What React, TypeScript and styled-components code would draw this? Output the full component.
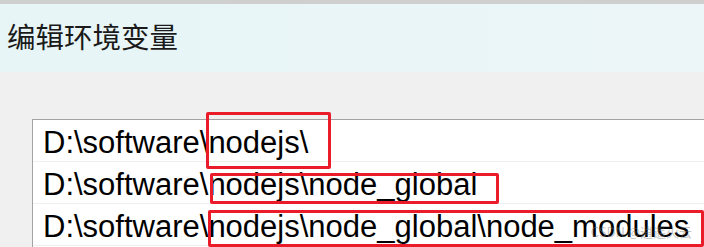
import React from 'react';
import styled, {createGlobalStyle} from "styled-components";

const GlobalStyle = createGlobalStyle`
html, body {
margin: 0;
padding: 0;
background: #f0f0f0;
overflow: hidden;
}
`

const Window = styled.div`
width: 704px;
height: 247px;
overflow: hidden;
display: flex;
flex-direction: column;
`
const TitleBar = styled.div`
height: 62px;
border-top: 4px solid #cfcfcf;
background: linear-gradient(90deg, #e7f5f6 0%, #ecf6f8 100%);
display: flex;
align-items: center;
padding-left: 7px;
padding-bottom: 6px;
box-sizing: content-box;
font-family: "Noto Sans CJK SC", "Microsoft YaHei", sans-serif;
font-size: 28.5px;
color: #1a1a1a;
`
const ListBox = styled.div`
position: relative;
margin: 47px 0 0 32px;
background: #fff;
border-top: 1px solid #a3a3a3;
border-left: 1px solid #a3a3a3;
flex: 1;
`
const Row = styled.div`
height: 42px;
box-sizing: border-box;
padding: 3px 0 0 10px;
border-bottom: 1px solid #efefef;
font-family: "Liberation Sans", Arial, sans-serif;
font-size: 31px;
line-height: 39px;
color: #000;
white-space: nowrap;
`
const Mark = styled.div<{$x: number; $y: number; $w: number; $h: number}>`
position: absolute;
left: ${p => p.$x}px;
top: ${p => p.$y}px;
width: ${p => p.$w}px;
height: ${p => p.$h}px;
box-sizing: border-box;
border: 3px solid #ea1c2a;
border-radius: 2px;
`
const Watermark = styled.span`
position: absolute;
right: 12px;
bottom: 6px;
font-family: "Noto Sans CJK SC", sans-serif;
font-size: 13px;
color: rgba(120, 120, 120, 0.45);
`

const paths = [
    'D:\\software\\nodejs\\',
    'D:\\software\\nodejs\\node_global',
    'D:\\software\\nodejs\\node_global\\node_modules',
]

// red boxes, coordinates relative to the list box
const marks = [
    {x: 173, y: -8, w: 125, h: 57},
    {x: 177, y: 53, w: 289, h: 31},
    {x: 175, y: 90, w: 496, h: 37},
]

const App = () => {
    return (
        <Window>
            <GlobalStyle/>
            <TitleBar>编辑环境变量</TitleBar>
            <ListBox>
                {paths.map(p => <Row key={p}>{p}</Row>)}
                {marks.map((m, i) => <Mark key={i} $x={m.x} $y={m.y} $w={m.w} $h={m.h}/>)}
                <Watermark>CSDN @逍遥火云</Watermark>
            </ListBox>
        </Window>
    );
};

export default App;
